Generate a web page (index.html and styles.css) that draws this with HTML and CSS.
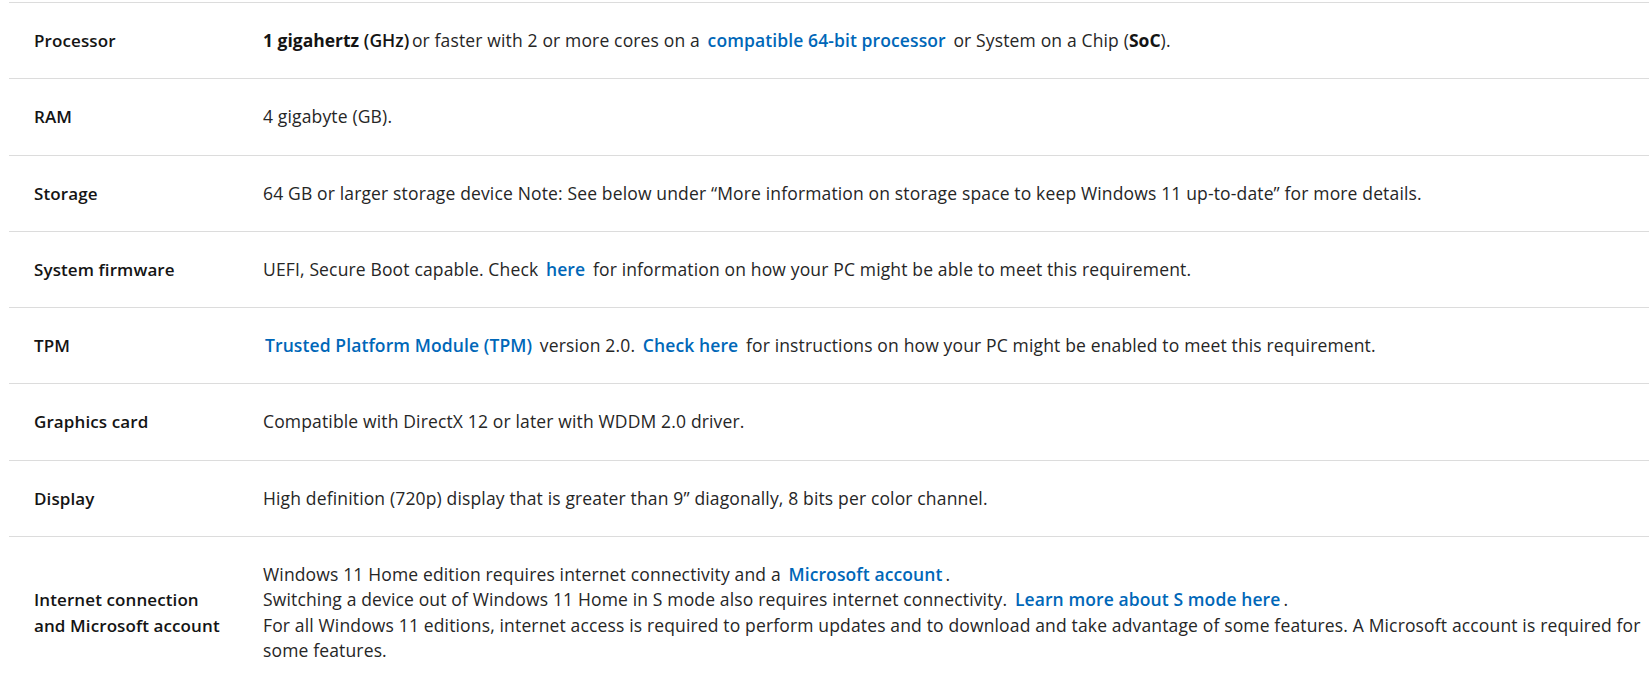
FILE: index.html
```html
<!DOCTYPE html>
<html lang="en">
<head>
<meta charset="utf-8">
<title>Windows 11 requirements</title>
<link rel="stylesheet" href="styles.css">
</head>
<body>
<div class="spec-table">
  <div class="spec-row">
    <div class="spec-label">Processor</div>
    <div class="spec-value"><b>1 gigahertz</b> <span class="semi">(GHz)</span> or faster with 2 or more cores on a <a class="link" href="#">compatible 64-bit processor</a> or System on a Chip (<b>SoC</b>).</div>
  </div>
  <div class="spec-row">
    <div class="spec-label">RAM</div>
    <div class="spec-value">4 gigabyte (GB).</div>
  </div>
  <div class="spec-row">
    <div class="spec-label">Storage</div>
    <div class="spec-value">64 GB or larger storage device Note: See below under “More information on storage space to keep Windows 11 up-to-date” for more details.</div>
  </div>
  <div class="spec-row">
    <div class="spec-label">System firmware</div>
    <div class="spec-value">UEFI, Secure Boot capable. Check <a class="link" href="#">here</a> for information on how your PC might be able to meet this requirement.</div>
  </div>
  <div class="spec-row">
    <div class="spec-label">TPM</div>
    <div class="spec-value"><a class="link first" href="#">Trusted Platform Module (TPM)</a> version 2.0. <a class="link" href="#">Check here</a> for instructions on how your PC might be enabled to meet this requirement.</div>
  </div>
  <div class="spec-row">
    <div class="spec-label">Graphics card</div>
    <div class="spec-value">Compatible with DirectX 12 or later with WDDM 2.0 driver.</div>
  </div>
  <div class="spec-row">
    <div class="spec-label">Display</div>
    <div class="spec-value">High definition (720p) display that is greater than 9” diagonally, 8 bits per color channel.</div>
  </div>
  <div class="spec-row">
    <div class="spec-label">Internet connection<br>and Microsoft account</div>
    <div class="spec-value">Windows 11 Home edition requires internet connectivity and a <a class="link" href="#">Microsoft account</a>.<br>Switching a device out of Windows 11 Home in S mode also requires internet connectivity. <a class="link" href="#">Learn more about S mode here</a>.<br>For all Windows 11 editions, internet access is required to perform updates and to download and take advantage of some features. A Microsoft account is required for some features.</div>
  </div>
</div>
</body>
</html>
```

FILE: styles.css
```css
html, body {
  margin: 0;
  padding: 0;
  background: #ffffff;
}

body {
  font-family: "Open Sans", "Noto Sans", "Liberation Sans", sans-serif;
  font-size: 17px;
  color: #262626;
  overflow: hidden;
}

.spec-table {
  margin: 2px 0 0 9px;
  width: 1650px;
}

.spec-row {
  display: flex;
  align-items: center;
  border-top: 1px solid #dcdcdc;
  padding: 25px 0;
  line-height: 25.3px;
}

.spec-label {
  flex: 0 0 254px;
  box-sizing: border-box;
  padding-left: 25px;
  font-weight: 600;
  color: #141414;
  letter-spacing: 0.1px;
}

.spec-value {
  flex: 1 1 auto;
  max-width: 1386px;
  font-size: 17.5px;
  letter-spacing: 0.15px;
}

.spec-value b {
  font-weight: 700;
  color: #141414;
  letter-spacing: 0;
}

.semi {
  font-weight: 600;
  color: #141414;
  letter-spacing: 0;
  margin-right: -2px;
}

.link {
  color: #0067b8;
  font-weight: 600;
  text-decoration: none;
  letter-spacing: 0.1px;
  margin: 0 3px;
}

.link.first {
  margin-left: 2px;
}
```
